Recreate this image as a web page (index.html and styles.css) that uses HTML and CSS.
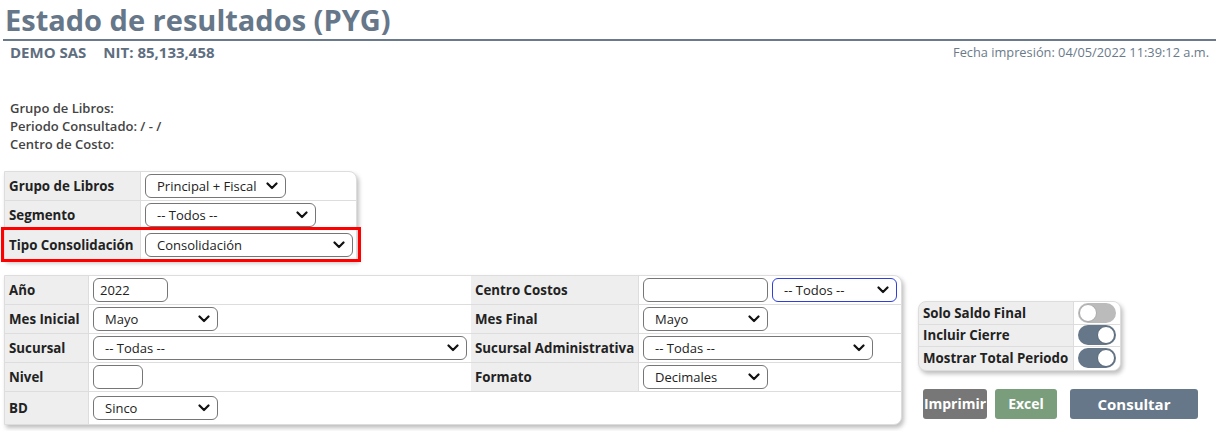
FILE: index.html
```html
<!DOCTYPE html>
<html lang="es">
<head>
<meta charset="utf-8">
<title>Estado de resultados (PYG)</title>
<link rel="stylesheet" href="styles.css">
</head>
<body>
<div class="page">
  <header class="head">
    <h1 class="title">Estado de resultados (PYG)</h1>
  </header>
  <div class="subhead">
    <div class="company"><span>DEMO SAS</span><span class="nit">NIT: 85,133,458</span></div>
    <div class="fecha">Fecha impresión: 04/05/2022 11:39:12 a.m.</div>
  </div>
  <div class="info">
    <div>Grupo de Libros:</div>
    <div>Periodo Consultado: / - /</div>
    <div>Centro de Costo:</div>
  </div>

  <div class="form1">
    <div class="row r1">
      <div class="lbl">Grupo de Libros</div>
      <div class="val"><div class="sel w140"><span>Principal + Fiscal</span><svg class="chev" viewBox="0 0 12 8"><path d="M1.5 1.5 L6 6 L10.5 1.5"/></svg></div></div>
    </div>
    <div class="row r1">
      <div class="lbl">Segmento</div>
      <div class="val"><div class="sel w170"><span>-- Todos --</span><svg class="chev" viewBox="0 0 12 8"><path d="M1.5 1.5 L6 6 L10.5 1.5"/></svg></div></div>
    </div>
    <div class="row r1 hl">
      <div class="lbl">Tipo Consolidación</div>
      <div class="val"><div class="sel w207"><span>Consolidación</span><svg class="chev" viewBox="0 0 12 8"><path d="M1.5 1.5 L6 6 L10.5 1.5"/></svg></div></div>
    </div>
  </div>

  <div class="bottom">
    <div class="form2">
      <div class="row r2">
        <div class="lbl">Año</div>
        <div class="val"><div class="inp w75">2022</div></div>
        <div class="lbl">Centro Costos</div>
        <div class="val dual"><div class="inp w124"></div><div class="sel w124 focus"><span>-- Todos --</span><svg class="chev" viewBox="0 0 12 8"><path d="M1.5 1.5 L6 6 L10.5 1.5"/></svg></div></div>
      </div>
      <div class="row r2">
        <div class="lbl">Mes Inicial</div>
        <div class="val"><div class="sel w124"><span>Mayo</span><svg class="chev" viewBox="0 0 12 8"><path d="M1.5 1.5 L6 6 L10.5 1.5"/></svg></div></div>
        <div class="lbl">Mes Final</div>
        <div class="val"><div class="sel w124"><span>Mayo</span><svg class="chev" viewBox="0 0 12 8"><path d="M1.5 1.5 L6 6 L10.5 1.5"/></svg></div></div>
      </div>
      <div class="row r2">
        <div class="lbl">Sucursal</div>
        <div class="val"><div class="sel w373"><span>-- Todas --</span><svg class="chev" viewBox="0 0 12 8"><path d="M1.5 1.5 L6 6 L10.5 1.5"/></svg></div></div>
        <div class="lbl">Sucursal Administrativa</div>
        <div class="val"><div class="sel w229"><span>-- Todas --</span><svg class="chev" viewBox="0 0 12 8"><path d="M1.5 1.5 L6 6 L10.5 1.5"/></svg></div></div>
      </div>
      <div class="row r2">
        <div class="lbl">Nivel</div>
        <div class="val"><div class="inp w50"></div></div>
        <div class="lbl">Formato</div>
        <div class="val"><div class="sel w124"><span>Decimales</span><svg class="chev" viewBox="0 0 12 8"><path d="M1.5 1.5 L6 6 L10.5 1.5"/></svg></div></div>
      </div>
      <div class="row r2 last">
        <div class="lbl">BD</div>
        <div class="val"><div class="sel w124"><span>Sinco</span><svg class="chev" viewBox="0 0 12 8"><path d="M1.5 1.5 L6 6 L10.5 1.5"/></svg></div></div>
        <div class="blank"></div>
      </div>
    </div>

    <div class="side">
      <div class="toggles">
        <div class="trow">
          <div class="tlbl">Solo Saldo Final</div>
          <div class="tval"><span class="switch"><span class="knob"></span></span></div>
        </div>
        <div class="trow">
          <div class="tlbl">Incluir Cierre</div>
          <div class="tval"><span class="switch on"><span class="knob"></span></span></div>
        </div>
        <div class="trow">
          <div class="tlbl">Mostrar Total Periodo</div>
          <div class="tval"><span class="switch on"><span class="knob"></span></span></div>
        </div>
      </div>
      <div class="buttons">
        <button class="btn gray">Imprimir</button>
        <button class="btn green">Excel</button>
        <button class="btn slate">Consultar</button>
      </div>
    </div>
  </div>
</div>
</body>
</html>
```

FILE: styles.css
```css
* { box-sizing: border-box; }
html, body { margin: 0; padding: 0; background: #fff; }
body { font-family: "Open Sans", "Noto Sans", "DejaVu Sans", sans-serif; color: #333; }

.page { width: 1219px; height: 431px; padding: 0 3px 0 3px; overflow: hidden; }

.head { border-bottom: 2px solid #6a7a8a; height: 41px; }
.title { margin: 0; padding-left: 2px; font-size: 29px; line-height: 40px; font-weight: 700; color: #667789; letter-spacing: 0; }

.subhead { display: flex; justify-content: space-between; align-items: flex-start; padding: 1px 7px 0 7px; height: 58px; }
.company { font-size: 15px; font-weight: 700; color: #5e6e80; line-height: 20px; }
.company .nit { margin-left: 17px; }
.fecha { font-size: 12.8px; color: #6a7a8a; line-height: 16px; margin-top: 2px; }

.info { padding-left: 7px; font-size: 13px; font-weight: 600; color: #444; line-height: 18px; height: 72px; }

.form1 { width: 353px; margin-left: 1px; border: 1px solid #ddd; border-radius: 0 8px 0 0; box-shadow: 2px 3px 4px rgba(0,0,0,0.25); background: #fff; }
.row { display: grid; align-items: stretch; border-bottom: 1px solid #ddd; }
.row:last-child { border-bottom: none; }
.r1 { grid-template-columns: 136px 1fr; height: 29px; }
.lbl { background: #eee; font-size: 13.3px; font-weight: 700; color: #222; display: flex; align-items: center; padding-left: 4px; border-right: 1px solid #ddd; white-space: nowrap; }
.val { display: flex; align-items: center; padding-left: 4px; gap: 4px; }
.hl { outline: 3px solid #f00; outline-offset: 0; position: relative; }
.form1 .hl { margin: 0 -2px 0 -1px; padding: 0 2px 0 1px; }

.sel { height: 24px; border: 1px solid #767676; border-radius: 6px; display: flex; align-items: center; justify-content: space-between; padding: 0 7px 0 11px; font-size: 13px; color: #222; background: #fff; }
.sel.focus { border-color: #2f3fd8; }
.inp { height: 24px; border: 1px solid #767676; border-radius: 6px; padding: 0 6px; font-size: 13px; color: #222; display: flex; align-items: center; background: #fff; }
.chev { width: 12px; height: 8px; fill: none; stroke: #111; stroke-width: 2.2; stroke-linecap: round; stroke-linejoin: round; }

.w50 { width: 50px; }
.w75 { width: 75px; }
.w124 { width: 125px; }
.w140 { width: 141px; }
.w170 { width: 171px; }
.w207 { width: 208px; }
.w229 { width: 230px; }
.w373 { width: 374px; }

.bottom { display: flex; align-items: flex-start; margin-top: 15px; }
.form2 { width: 898px; margin-left: 1px; border: 1px solid #ddd; border-radius: 0 8px 8px 0; box-shadow: 2px 3px 4px rgba(0,0,0,0.25); background: #fff; }
.r2 { grid-template-columns: 84px 382px 168px 1fr; height: 29px; }
.r2 .lbl { padding-left: 4px; }
.r2 .val { padding-left: 4px; }
.r2.last { grid-template-columns: 84px 382px 1fr; height: 32px; }

.side { margin-left: 16px; padding-top: 26px; }
.toggles { width: 203px; border: 1px solid #ddd; border-radius: 8px; overflow: hidden; box-shadow: 2px 3px 4px rgba(0,0,0,0.25); background: #eee; }
.trow { display: grid; grid-template-columns: 155px 1fr; height: 22.5px; border-bottom: 1px solid #ddd; }
.trow:last-child { border-bottom: none; }
.tlbl { font-size: 13.3px; font-weight: 700; color: #222; display: flex; align-items: center; padding-left: 4px; border-right: 1px solid #ddd; white-space: nowrap; }
.tval { display: flex; align-items: center; padding-left: 4px; background: #fff; }
.switch { width: 38px; height: 20px; border-radius: 10px; background: #bbb; display: flex; align-items: center; padding: 1px; }
.switch .knob { width: 18px; height: 18px; border-radius: 50%; background: #fff; border: 1px solid #aaa; }
.switch.on { background: #667789; justify-content: flex-end; }
.switch.on .knob { border-color: #556677; }

.buttons { display: flex; margin-top: 18px; padding-left: 5px; }
.btn { height: 30px; border: none; border-radius: 3px; color: #fff; font-family: "Open Sans", "Noto Sans", sans-serif; font-weight: 700; font-size: 14px; padding: 0; white-space: nowrap; overflow: visible; }
.btn.gray { width: 64px; background: #777; margin-right: 8px; }
.btn.green { width: 62px; background: #7a9d7c; margin-right: 13px; }
.btn.slate { width: 128px; background: #667789; font-size: 15px; }
```
